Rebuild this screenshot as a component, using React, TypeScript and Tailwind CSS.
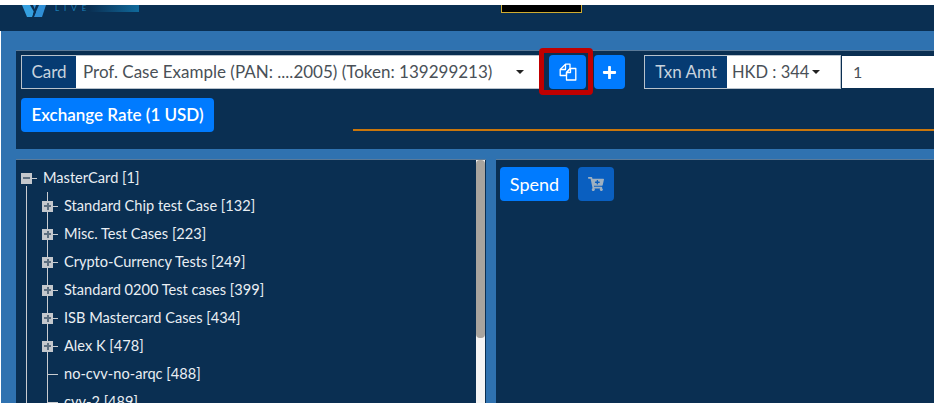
import React from "react";
import { FaCartPlus, FaPlus } from "react-icons/fa";

const font = { fontFamily: '"Lato", "Noto Sans", sans-serif' };

const nodes = [
  { label: "Standard Chip test Case [132]", folder: true },
  { label: "Misc. Test Cases [223]", folder: true },
  { label: "Crypto-Currency Tests [249]", folder: true },
  { label: "Standard 0200 Test cases [399]", folder: true },
  { label: "ISB Mastercard Cases [434]", folder: true },
  { label: "Alex K [478]", folder: true },
  { label: "no-cvv-no-arqc [488]", folder: false },
  { label: "cvv-2 [489]", folder: false },
];

const Caret = () => (
  <span className="inline-block w-0 h-0 border-x-[4px] border-x-transparent border-t-[4px] border-t-[#222]" />
);

const ToggleBox = ({ open }: { open?: boolean }) => (
  <span className="flex items-center justify-center w-[11px] h-[11px] bg-[#c4c8cd] shrink-0 z-10 relative">
    <span className="absolute w-[7px] h-[2px] bg-[#5d6f80]" />
    {!open && <span className="absolute w-[2px] h-[7px] bg-[#5d6f80]" />}
  </span>
);

const CopyIcon = () => (
  <svg width="18" height="18" viewBox="0 0 18 18" fill="none" stroke="white" strokeWidth="1.3" strokeLinejoin="round">
    <path d="M6.5 1.2H11V5.5L7.5 9.5V12.5H1.2V6.5L6.5 1.2Z" />
    <path d="M6.5 1.2V6.5H1.2" />
    <path d="M7.5 9.5L11.5 5.5H16.8V17H7.5V9.5Z" />
    <path d="M11.5 5.5V9.5H7.5" />
  </svg>
);

export default function App() {
  return (
    <div className="w-[934px] h-[403px] overflow-hidden bg-white pt-[5px]" style={font}>
      <header className="relative h-[26px] bg-[#0a2f52]">
        <div className="absolute left-[22px] top-0 flex items-start">
          <svg width="25" height="12" viewBox="0 0 25 12">
            <path d="M0 0H8L12 7L10 12H5Z" fill="#35a0e0" />
            <path d="M11 0H24L20 12H12L14 7Z" fill="#2f8fd6" />
            <path d="M14 0H17L12 11L11 9Z" fill="#0a2f52" />
          </svg>
          <span className="ml-[8px] text-[8px] leading-[7px] tracking-[5px] text-[#1b7fb5]">LIVE</span>
          <span className="w-[50px] h-[7px] -ml-[2px] bg-gradient-to-r from-[#0a2f52] to-[#0f6a9c]" />
        </div>
        <div className="absolute left-[501px] top-0 w-[81px] h-[8px] bg-black border border-t-0 border-[#d0ac30]" />
      </header>

      <main className="h-[372px] bg-[#2f72b0] pl-[15px] pt-[19px] border-l border-white">
        <section className="relative h-[99px] bg-[#0a2f52] border-t border-[#5a7a99] pl-[5px] pt-[4px]">
          <div className="flex items-start h-[34px]">
            <div className="flex w-[519px] h-[34px] bg-white border border-[#b8c2cc] text-[#495057]">
              <span className="flex items-center justify-center w-[54px] bg-[#063b72] text-[#c8d3de] text-[17px]">Card</span>
              <span className="flex-1 flex items-center pl-[7px] text-[17px] whitespace-nowrap">
                Prof. Case Example (PAN: ....2005) (Token: 139299213)
              </span>
              <span className="flex items-center pr-[15px]"><Caret /></span>
            </div>
            <button className="ml-[9px] w-[37px] h-[34px] rounded-[4px] bg-[#007bff] flex items-center justify-center">
              <CopyIcon />
            </button>
            <button className="ml-[8px] w-[31px] h-[34px] rounded-[4px] bg-[#007bff] flex items-center justify-center">
              <FaPlus size={15} color="white" />
            </button>
            <div className="ml-[19px] flex w-[197px] h-[34px] bg-white border border-[#b8c2cc] text-[#495057]">
              <span className="flex items-center justify-center w-[82px] bg-[#063b72] text-[#c8d3de] text-[17px]">Txn Amt</span>
              <span className="flex items-center gap-[3px] pl-[5px] text-[16.5px]">HKD : 344<Caret /></span>
            </div>
            <div className="ml-px flex-1 h-[32px] mt-px bg-white text-[#495057] text-[16px] flex items-center pl-[11px]">1</div>
          </div>

          <div className="relative mt-[9px] h-[34px]">
            <button className="w-[193px] h-[34px] rounded-[4px] bg-[#007bff] text-white font-semibold text-[17px]">
              Exchange Rate (1 USD)
            </button>
            <div className="absolute left-[332px] right-0 top-[31px] h-[2px] bg-[#c9760c]" />
          </div>

          {/* red highlight drawn over the copy button */}
          <div className="absolute left-[523px] top-[-3px] w-[54px] h-[47px] rounded-[4px] border-[5px] border-[#c00000]" />
        </section>

        <section className="flex h-[244px] mt-[10px] gap-[10px]">
          <div className="relative w-[470px] bg-[#0a2f52] border-t border-[#5a7a99] overflow-hidden text-[#e9eef3] text-[14.6px] leading-[20px]">
            <div className="flex items-center h-[28px] mt-[4px] pl-[5px]">
              <ToggleBox open />
              <span className="w-[5px] h-px bg-[#c9ccd0]" />
              <span className="ml-[6px] -mt-px">MasterCard [1]</span>
            </div>
            <div className="ml-[10px] border-l border-[#c9ccd0] -mt-[6px] pt-[6px]">
              <ul className="ml-[20px] border-l border-[#c9ccd0]">
                {nodes.map((n) => (
                  <li key={n.label} className="relative flex items-center h-[28px]">
                    <span className={n.folder ? "-ml-[6px] flex items-center" : "flex items-center"}>
                      {n.folder && <ToggleBox />}
                      <span className={n.folder ? "w-[5px] h-px bg-[#c9ccd0]" : "w-[10px] h-px bg-[#c9ccd0]"} />
                    </span>
                    <span className="ml-[6px] -mt-px whitespace-nowrap">{n.label}</span>
                  </li>
                ))}
              </ul>
            </div>
            {/* scrollbar track and thumb */}
            <div className="absolute right-[1px] top-0 bottom-0 w-[9px] bg-[#f5f5f5]">
              <div className="h-[178px] rounded-[4px] bg-[#a8a49e]" />
            </div>
          </div>

          <div className="flex-1 bg-[#0a2f52] border-t border-[#5a7a99] pl-[4px] pt-[7px] flex items-start gap-[9px]">
            <button className="w-[69px] h-[34px] rounded-[4px] bg-[#007bff] text-white text-[18px]">Spend</button>
            <button className="w-[36px] h-[34px] rounded-[4px] bg-[#0a5fc0] flex items-center justify-center">
              <FaCartPlus size={16} color="#9fb0c0" />
            </button>
          </div>
        </section>
      </main>
    </div>
  );
}
